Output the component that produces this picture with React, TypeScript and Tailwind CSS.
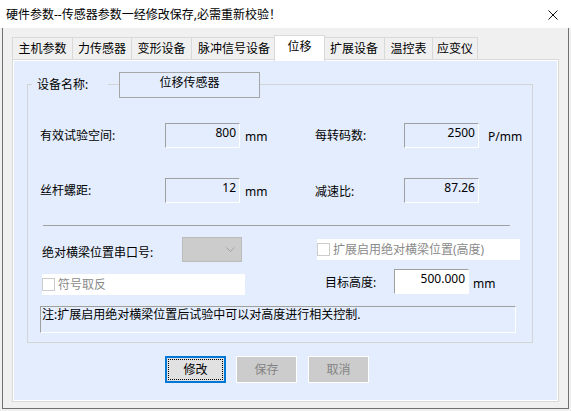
import React from 'react'

const tabs = [
  { name: '主机参数', w: 'w-[60px]' },
  { name: '力传感器', w: 'w-[59px]' },
  { name: '变形设备', w: 'w-[60px]' },
  { name: '脉冲信号设备', w: 'w-[85px]' },
  { name: '位移', w: 'w-[51px]', active: true },
  { name: '扩展设备', w: 'w-[61px]' },
  { name: '温控表', w: 'w-[48px]' },
  { name: '应变仪', w: 'w-[46px]', last: true },
]

function Field({ value, white }: { value: string; white?: boolean }) {
  return (
    <div
      className={`flex h-[25px] w-[75px] justify-end border border-t-[#a0a0a0] border-l-[#a0a0a0] border-r-white border-b-white pr-[3px] pt-[1px] leading-[16px] ${
        white ? 'bg-white' : 'bg-[#e3edfd]'
      }`}
    >
      {value}
    </div>
  )
}

function CheckRow({ label, w }: { label: string; w: string }) {
  return (
    <div className={`flex h-[21px] items-center bg-white ${w}`}>
      <span className="h-[13px] w-[13px] shrink-0 border border-[#cccccc] bg-white" />
      <span className="ml-[3px] leading-[16px] text-[#8a8a8a]">{label}</span>
    </div>
  )
}

export default function App() {
  return (
    <div className="h-[411px] w-[571px] overflow-hidden bg-[#f0f0f0] font-['Noto_Sans','Noto_Sans_CJK_SC',sans-serif] text-[12px] leading-[16px] text-black">
      {/* 标题栏 */}
      <div className="flex h-[28px] items-center justify-between bg-white pl-[6px] pr-[13px]">
        <span className="mt-[2px]">硬件参数--传感器参数一经修改保存,必需重新校验！</span>
        <svg className="mt-[1px] h-[10px] w-[10px]" viewBox="0 0 10 10" fill="none" stroke="#111" strokeWidth="1">
          <path d="M0.5 0.5L9.5 9.5M9.5 0.5L0.5 9.5" />
        </svg>
      </div>

      {/* 窗口主体 */}
      <div className="ml-[2px] h-[381px] w-[567px] border-x border-b border-[#707070] bg-[#f0f0f0]">
        {/* 选项卡 */}
        <div className="flex items-end pl-[9px] pt-[7px]">
          {tabs.map((t) =>
            t.active ? (
              <div
                key={t.name}
                className={`relative z-10 -mx-[2px] -mb-[2px] flex h-[26px] justify-center border-x border-t border-[#d9d9d9] bg-white pt-[3px] ${t.w}`}
              >
                {t.name}
              </div>
            ) : (
              <div
                key={t.name}
                className={`flex h-[22px] items-center justify-center border-l border-t border-[#d9d9d9] bg-[#f0f0f0] pt-[1px] ${
                  t.last ? 'border-r' : ''
                } ${t.w}`}
              >
                {t.name}
              </div>
            )
          )}
        </div>

        {/* 内容面板 */}
        <div className="ml-[9px] h-[343px] w-[547px] border border-[#d9d9d9] bg-white p-px">
          <div className="h-full w-full bg-[#e3edfd] pl-[13px] pt-[23px]">
            {/* 分组框 */}
            <div className="relative h-[259px] w-[506px] border border-[#d5d5d5] pl-[12px] pt-[38px]">
              <span className="absolute -top-[8px] left-[4px] w-[76px] bg-[#e3edfd] px-[5px]">设备名称:</span>
              <div className="absolute -top-[13px] left-[91px] flex h-[26px] w-[141px] justify-center border border-[#a6a6a6] bg-[#e3edfd] pt-[2px]">
                位移传感器
              </div>

              <div className="flex items-center">
                <span className="w-[125px]">有效试验空间:</span>
                <Field value="800" />
                <span className="w-[75px] pl-[5px] pt-[3px]">mm</span>
                <span className="w-[89px]">每转码数:</span>
                <Field value="2500" />
                <span className="pl-[9px] pt-[3px]">P/mm</span>
              </div>

              <div className="mt-[30px] flex items-center">
                <span className="w-[125px]">丝杆螺距:</span>
                <Field value="12" />
                <span className="w-[75px] pl-[5px] pt-[3px]">mm</span>
                <span className="w-[89px] pt-[3px]">减速比:</span>
                <Field value="87.26" />
              </div>

              <div className="ml-[3px] mt-[22px] h-px w-[467px] bg-[#a0a0a0]" />

              <div className="mt-[11px] flex items-center">
                <span className="ml-[2px] w-[140px] pt-[6px]">绝对横梁位置串口号:</span>
                <div className="flex h-[25px] w-[60px] items-center justify-end border border-[#bcbcbc] bg-[#cccccc] pr-[6px]">
                  <svg className="h-[5px] w-[9px]" viewBox="0 0 9 5" fill="none" stroke="#a2a2a2" strokeWidth="1">
                    <path d="M0.5 0.5L4.5 4.5L8.5 0.5" />
                  </svg>
                </div>
                <div className="w-[75px]" />
                <CheckRow label="扩展启用绝对横梁位置(高度)" w="w-[203px]" />
              </div>

              <div className="mt-[7px] flex items-start">
                <div className="ml-[2px] mt-[5px]">
                  <CheckRow label="符号取反" w="w-[203px]" />
                </div>
                <span className="ml-[80px] w-[69px] self-center pt-[2px]">目标高度:</span>
                <Field value="500.000" white />
                <span className="self-center pl-[4px] pt-[3px]">mm</span>
              </div>

              <div className="mt-[11px] h-[27px] w-[476px] border border-t-[#a0a0a0] border-l-[#a0a0a0] border-r-white border-b-white pl-[1px]">
                注:扩展启用绝对横梁位置后试验中可以对高度进行相关控制.
              </div>
            </div>

            {/* 按钮 */}
            <div className="ml-[138px] mt-[13px] flex">
              <button className="flex h-[27px] w-[61px] border-2 border-[#0078d7] bg-[#e1e1e1] p-px">
                <span className="flex h-full w-full items-center justify-center border border-dotted border-black pt-[1px]">修改</span>
              </button>
              <button className="ml-[10px] flex h-[27px] w-[61px] items-center justify-center border border-white bg-[#cccccc] pt-[1px] text-[#838383]">
                保存
              </button>
              <button className="ml-[11px] flex h-[27px] w-[61px] items-center justify-center border border-white bg-[#cccccc] pt-[1px] text-[#838383]">
                取消
              </button>
            </div>
          </div>
        </div>
      </div>
    </div>
  )
}
